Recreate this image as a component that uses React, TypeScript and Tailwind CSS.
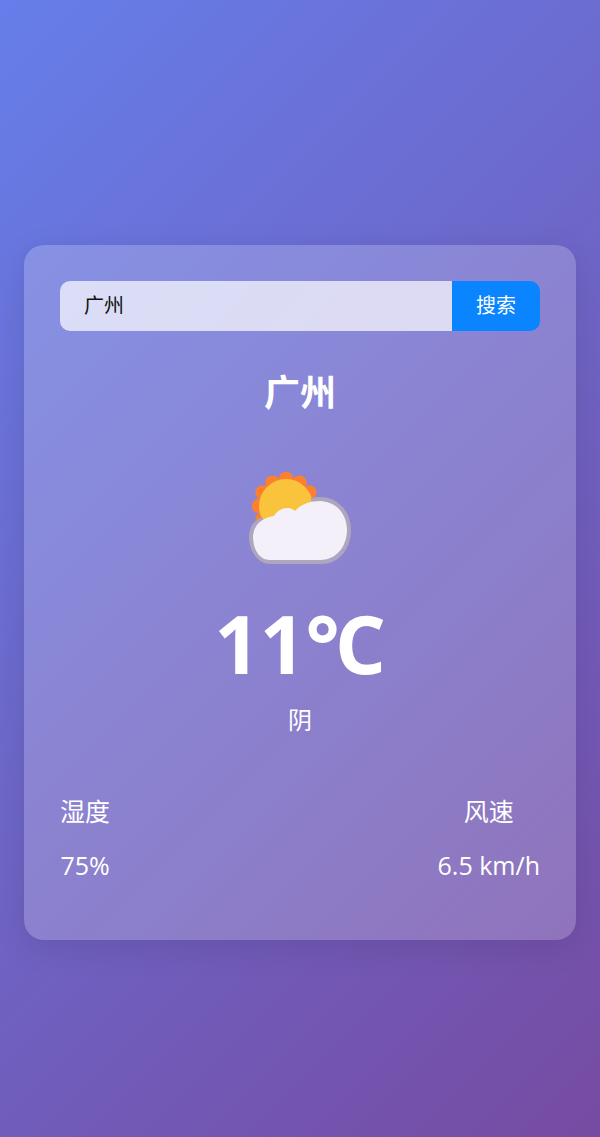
const FONT = "font-['Open_Sans','Noto_Sans_CJK_SC',sans-serif]";

function CloudSun() {
  const rays = [];
  for (let i = 0; i < 12; i++) {
    const a = (i / 12) * Math.PI * 2;
    rays.push(<circle key={i} cx={41 + Math.cos(a) * 26.8} cy={41 + Math.sin(a) * 26.8} r="7.4" fill="#fe7f2d" />);
  }
  return (
    <svg width="110" height="100" viewBox="0 0 110 100">
      <circle cx="41" cy="41" r="27" fill="#fe7f2d" />
      {rays}
      <circle cx="41" cy="41" r="27" fill="#f9c43c" />
      <path
        d="M18 54 C9 57 6 64 6 72 C6 85 14 97 25 97 L76 97 C92 97 104 84 104 65 C104 48 92 34 75 34 C72 34 69 34 66 35"
        fill="none"
        stroke="#aea6bd"
        strokeWidth="4"
      />
      <path
        d="M8 72 C8 60 17 53 29 51 C32 46 37 43 42 43 C45 43 48 44 50 46 C56 39 65 36 75 36 C91 36 102 49 102 65 C102 83 90 95 76 95 L25 95 C14 95 8 84 8 72 Z"
        fill="#f4f0fa"
      />
    </svg>
  );
}

export default function App() {
  return (
    <div className={`min-h-[1137px] bg-[linear-gradient(135deg,#667eea_0%,#764ba2_100%)] px-6 pt-[245px] ${FONT}`}>
      <div className="h-[695px] rounded-[20px] bg-white/20 p-9 text-white shadow-[0_8px_32px_rgba(0,0,0,0.1)]">
        <div className="flex h-[50px]">
          <input
            defaultValue="广州"
            className="min-w-0 flex-1 rounded-l-[10px] bg-white/70 px-6 text-xl text-[#111] outline-none"
          />
          <button className="w-[88px] rounded-r-[10px] bg-[#0a84ff] text-xl text-white">搜索</button>
        </div>

        <h1 className="mt-[37px] text-center text-4xl leading-[50px] font-bold">广州</h1>

        <div className="mt-[47px] flex justify-center">
          <CloudSun />
        </div>

        <div className="mt-[27px] text-center text-[80px] leading-[102px] font-bold">
          11<span className="tracking-[-5px]">°</span>C
        </div>
        <div className="mt-[9px] text-center text-2xl leading-[33px]">阴</div>

        <div className="mt-[59px] flex justify-between text-[25px]">
          <div className="flex flex-col items-center gap-[21px]">
            <span className="leading-[33px]">湿度</span>
            <span className="leading-[33px]">75%</span>
          </div>
          <div className="flex flex-col items-center gap-[21px]">
            <span className="leading-[33px]">风速</span>
            <span className="leading-[33px]">6.5 km/h</span>
          </div>
        </div>
      </div>
    </div>
  );
}
